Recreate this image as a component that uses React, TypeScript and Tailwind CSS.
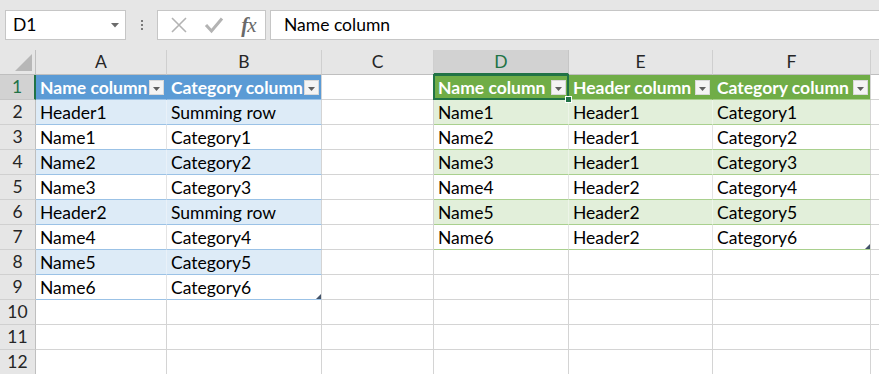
import React from "react";

const W = { h: 36, A: 131, B: 155, C: 112, D: 135, E: 144, F: 158, R: 8 };

type CellKind = "plain" | "bh" | "bb" | "bw" | "gh" | "gb" | "gw";

const blueRows: [string, string][] = [
  ["Header1", "Summing row"],
  ["Name1", "Category1"],
  ["Name2", "Category2"],
  ["Name3", "Category3"],
  ["Header2", "Summing row"],
  ["Name4", "Category4"],
  ["Name5", "Category5"],
  ["Name6", "Category6"],
];

const greenRows: [string, string, string][] = [
  ["Name1", "Header1", "Category1"],
  ["Name2", "Header1", "Category2"],
  ["Name3", "Header1", "Category3"],
  ["Name4", "Header2", "Category4"],
  ["Name5", "Header2", "Category5"],
  ["Name6", "Header2", "Category6"],
];

function DropBtn() {
  return (
    <div className="shrink-0 w-[15px] h-[15px] mr-[2px] mt-[1px] bg-[#f4f4f4] border border-[#d9d9d9] flex items-center justify-center">
      <svg width="9" height="6" viewBox="0 0 9 6" className="mt-[2px]">
        <path d="M1 1 L8 1 L4.5 5 Z" fill="#5f5f5f" />
      </svg>
    </div>
  );
}

function Cell({
  w,
  kind,
  text,
  drop,
  edge,
  children,
  extra,
}: {
  w: number;
  kind: CellKind;
  text?: string;
  drop?: boolean;
  edge?: boolean;
  children?: React.ReactNode;
  extra?: string;
}) {
  let cls = "";
  switch (kind) {
    case "plain":
      cls = "bg-white border-b-[#d4d4d4] border-r-[#d4d4d4] text-black";
      break;
    case "bh":
      cls = "bg-[#5b9bd5] border-b-[#9bc2e6] text-white font-bold " + (edge ? "border-r-[#d4d4d4]" : "border-r-[#5b9bd5]");
      break;
    case "bb":
      cls = "bg-[#ddebf7] border-b-[#9bc2e6] text-black " + (edge ? "border-r-[#d4d4d4]" : "border-r-[#e9f1f9]");
      break;
    case "bw":
      cls = "bg-white border-b-[#9bc2e6] text-black " + (edge ? "border-r-[#d4d4d4]" : "border-r-[#e4e4e4]");
      break;
    case "gh":
      cls = "bg-[#70ad47] border-b-[#a9d08e] text-white font-bold " + (edge ? "border-r-[#d4d4d4]" : "border-r-[#70ad47]");
      break;
    case "gb":
      cls = "bg-[#e2efda] border-b-[#a9d08e] text-black " + (edge ? "border-r-[#d4d4d4]" : "border-r-[#edf5e8]");
      break;
    case "gw":
      cls = "bg-white border-b-[#a9d08e] text-black " + (edge ? "border-r-[#d4d4d4]" : "border-r-[#e4e4e4]");
      break;
  }
  return (
    <div
      className={`relative shrink-0 h-[25px] border-b border-r flex items-center pl-[4px] ${cls} ${extra ?? ""}`}
      style={{ width: w }}
    >
      <span className="flex-1 whitespace-nowrap overflow-hidden leading-[24px] pt-[1px]">{text}</span>
      {drop && <DropBtn />}
      {children}
    </div>
  );
}

function RowHeader({ n, selected }: { n: number; selected?: boolean }) {
  return (
    <div
      className={`shrink-0 w-[36px] h-[25px] border-b flex items-center justify-center pt-[1px] ${
        selected
          ? "bg-[#d2d2d2] text-[#217346] border-b-[#c6c6c6] border-r-2 border-r-[#217346]"
          : "bg-[#e6e6e6] text-[#262626] border-b-[#d0d0d0] border-r border-r-[#bfbfbf]"
      }`}
    >
      {n}
    </div>
  );
}

function ResizeHandle({ color }: { color: string }) {
  return (
    <svg width="5" height="5" viewBox="0 0 5 5" className="absolute right-[0px] bottom-[0px]">
      <path d="M5 0 L5 5 L0 5 Z" fill={color} />
    </svg>
  );
}

export default function App() {
  const rows: React.ReactNode[] = [];
  for (let r = 1; r <= 12; r++) {
    const cells: React.ReactNode[] = [];
    if (r === 1) {
      cells.push(<Cell key="A" w={W.A} kind="bh" text="Name column" drop />);
      cells.push(<Cell key="B" w={W.B} kind="bh" text="Category column" drop edge />);
    } else if (r <= 9) {
      const k: CellKind = r % 2 === 0 ? "bb" : "bw";
      const [a, b] = blueRows[r - 2];
      cells.push(<Cell key="A" w={W.A} kind={k} text={a} />);
      cells.push(
        <Cell key="B" w={W.B} kind={k} text={b} edge>
          {r === 9 && <ResizeHandle color="#44546a" />}
        </Cell>
      );
    } else {
      cells.push(<Cell key="A" w={W.A} kind="plain" />);
      cells.push(<Cell key="B" w={W.B} kind="plain" />);
    }
    cells.push(<Cell key="C" w={W.C} kind="plain" />);
    if (r === 1) {
      cells.push(
        <Cell key="D" w={W.D} kind="gh" text="Name column" drop extra="z-10">
          <div className="absolute left-[-1px] top-[-1px] right-[-1px] bottom-[-1px] border-2 border-[#217346] pointer-events-none" />
          <div className="absolute right-[-4px] bottom-[-4px] w-[7px] h-[7px] bg-[#217346] border border-white" />
        </Cell>
      );
      cells.push(<Cell key="E" w={W.E} kind="gh" text="Header column" drop />);
      cells.push(<Cell key="F" w={W.F} kind="gh" text="Category column" drop edge />);
    } else if (r <= 7) {
      const k: CellKind = r % 2 === 0 ? "gb" : "gw";
      const [d, e, f] = greenRows[r - 2];
      cells.push(<Cell key="D" w={W.D} kind={k} text={d} />);
      cells.push(<Cell key="E" w={W.E} kind={k} text={e} />);
      cells.push(
        <Cell key="F" w={W.F} kind={k} text={f} edge>
          {r === 7 && <ResizeHandle color="#44546a" />}
        </Cell>
      );
    } else {
      cells.push(<Cell key="D" w={W.D} kind="plain" />);
      cells.push(<Cell key="E" w={W.E} kind="plain" />);
      cells.push(<Cell key="F" w={W.F} kind="plain" />);
    }
    cells.push(<div key="R" className="shrink-0 w-[8px] h-[25px] bg-white border-b border-[#d4d4d4]" />);
    rows.push(
      <div key={r} className="flex">
        <RowHeader n={r} selected={r === 1} />
        {cells}
      </div>
    );
  }

  const colHdr = (label: string, w: number, selected?: boolean) => (
    <div
      key={label}
      className={`shrink-0 h-[25px] border-r border-b flex items-center justify-center pt-[1px] ${
        selected
          ? "bg-[#d2d2d2] text-[#217346] border-r-[#c6c6c6] border-b-[#217346] border-b-2"
          : "bg-[#e6e6e6] text-[#262626] border-r-[#cfcfcf] border-b-[#bfbfbf]"
      }`}
      style={{ width: w }}
    >
      {label}
    </div>
  );

  return (
    <div className="w-[879px] h-[374px] overflow-hidden bg-white font-['Lato',sans-serif] text-[17.5px] text-black">
      {/* Formula bar */}
      <div className="h-[50px] bg-[#e6e6e6] flex items-start pt-[10px] pl-[5px]">
        <div className="w-[121px] h-[30px] bg-white border border-[#c6c6c6] flex items-center justify-between pl-[7px] pr-[6px]">
          <span className="leading-none">D1</span>
          <svg width="8" height="5" viewBox="0 0 8 5">
            <path d="M0 0 L8 0 L4 4.5 Z" fill="#6b6b6b" />
          </svg>
        </div>
        <div className="w-[31px] h-[30px] flex flex-col items-center justify-center gap-[2px]">
          <div className="w-[2px] h-[2px] bg-[#7a7a7a]" />
          <div className="w-[2px] h-[2px] bg-[#7a7a7a]" />
          <div className="w-[2px] h-[2px] bg-[#7a7a7a]" />
        </div>
        <div className="w-[109px] h-[30px] bg-white border border-[#c6c6c6] flex items-center">
          <div className="w-[38px] flex justify-center pl-[4px]">
            <svg width="18" height="18" viewBox="0 0 18 18">
              <path d="M2 2 L16 16 M16 2 L2 16" stroke="#b3b3b3" strokeWidth="1.6" fill="none" />
            </svg>
          </div>
          <div className="w-[36px] flex justify-center">
            <svg width="20" height="18" viewBox="0 0 20 18">
              <path d="M2 9 L7.5 15 L18 2.5" stroke="#b3b3b3" strokeWidth="3" fill="none" />
            </svg>
          </div>
          <div className="w-[33px] flex justify-center">
            <span className="font-['Liberation_Serif',serif] italic text-[21px] leading-none text-[#6a6a6a] tracking-[-1px]">
              <span className="font-bold">f</span>x
            </span>
          </div>
        </div>
        <div className="ml-[4px] flex-1 h-[30px] bg-white border-y border-l border-[#c6c6c6] flex items-center pl-[13px]">
          Name column
        </div>
      </div>
      {/* Column headers */}
      <div className="flex">
        <div className="shrink-0 w-[36px] h-[25px] bg-[#e6e6e6] border-r border-b border-r-[#bfbfbf] border-b-[#bfbfbf] relative">
          <svg width="17" height="17" viewBox="0 0 17 17" className="absolute right-[3px] bottom-[3px]">
            <path d="M17 0 L17 17 L0 17 Z" fill="#b7b7b7" />
          </svg>
        </div>
        {colHdr("A", W.A)}
        {colHdr("B", W.B)}
        {colHdr("C", W.C)}
        {colHdr("D", W.D, true)}
        {colHdr("E", W.E)}
        {colHdr("F", W.F)}
        <div className="shrink-0 w-[8px] h-[25px] bg-[#e6e6e6] border-b border-[#bfbfbf]" />
      </div>
      {rows}
    </div>
  );
}
